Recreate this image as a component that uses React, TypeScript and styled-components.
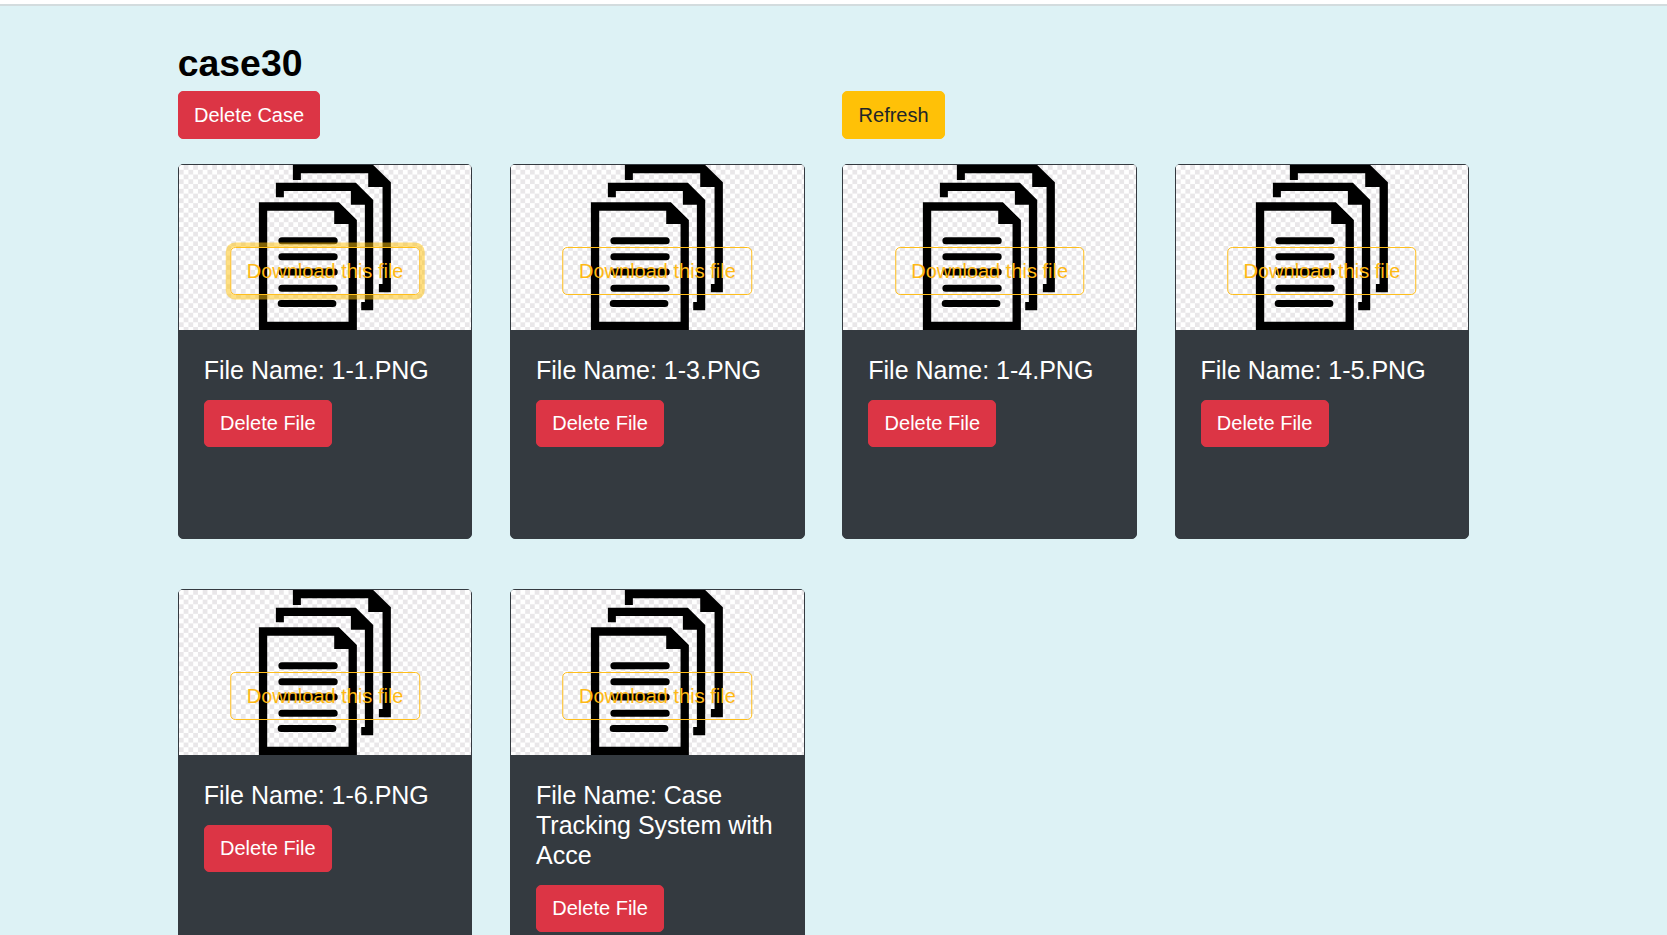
import React from "react";
import styled, { createGlobalStyle, css } from "styled-components";

const GlobalStyle = createGlobalStyle`
  *, *::before, *::after { box-sizing: border-box; }
  html, body { margin: 0; height: 935px; overflow: hidden; background: #ddf2f5; }
  body { font-family: "Liberation Sans", Arial, sans-serif; font-size: 20px; line-height: 1.5; color: #212529; }
`;

const TopEdge = styled.div`
  height: 6px;
  background: #fff;
  border-bottom: 2px solid #d3dcde;
`;

const Page = styled.main`
  width: 1291.6px;
  margin: 0 0 0 177.74px;
  padding-top: 29px;
`;

const Title = styled.h1`
  margin: 0;
  height: 56px;
  font-size: 37.4px;
  line-height: 56px;
  font-weight: 700;
  color: #000;
`;

const grid = css`
  display: grid;
  grid-template-columns: repeat(4, 294.75px);
  column-gap: 37.52px;
`;

const Actions = styled.div`
  ${grid}
  justify-items: start;
  margin-bottom: 25px;
`;

const CardGrid = styled.section`
  ${grid}
  grid-auto-rows: 375px;
  row-gap: 50px;
`;

const Button = styled.button<{ $kind: "danger" | "warning"; $column?: number; $tall?: boolean }>`
  ${(p) => p.$column && `grid-column: ${p.$column};`}
  height: ${(p) => (p.$tall ? 48 : 47)}px;
  padding: ${(p) => (p.$tall ? "0 15.3px" : "0 15.3px 2px")};
  border: 1px solid ${(p) => (p.$kind === "danger" ? "#dc3545" : "#ffc107")};
  border-radius: 5px;
  font: inherit;
  white-space: nowrap;
  color: ${(p) => (p.$kind === "danger" ? "#fff" : "#212529")};
  background: ${(p) => (p.$kind === "danger" ? "#dc3545" : "#ffc107")};
`;

const Card = styled.article`
  position: relative;
  height: 375px;
  border: 1px solid #343a40;
  border-radius: 5px;
  background: #343a40;
`;

const Thumb = styled.svg`
  display: block;
  width: 100%;
  height: 165px;
  border-radius: 2px 2px 0 0;
`;

const DownloadButton = styled.button<{ $focused?: boolean }>`
  position: absolute;
  top: 82px;
  left: 50%;
  transform: translateX(-50%);
  height: 48px;
  width: 189.5px;
  padding: 0;
  border: 1px solid #ffbe1c;
  border-radius: 5px;
  background: transparent;
  color: #ffb914;
  font: inherit;
  white-space: nowrap;
  ${(p) => p.$focused && "box-shadow: 0 0 0 4.5px rgba(255, 193, 7, 0.5);"}
`;

const CardBody = styled.div`
  padding: 25px;
`;

const FileName = styled.h5`
  margin: 0 0 15px;
  font-size: 25px;
  line-height: 30px;
  font-weight: 400;
  color: #fff;
`;

const files = ["1-1.PNG", "1-3.PNG", "1-4.PNG", "1-5.PNG", "1-6.PNG", "Case Tracking System with Acce"];

function FilesPicture({ id }: { id: string }) {
  return (
    <Thumb viewBox="0 0 879 495" preserveAspectRatio="xMidYMid slice" aria-hidden="true">
      <defs>
        <pattern id={id} width="28.6" height="28.6" patternUnits="userSpaceOnUse">
          <rect width="28.6" height="28.6" fill="#fff" />
          <path d="M14.3 0h14.3v14.3H14.3zM0 14.3h14.3v14.3H0z" fill="#e9e7e9" />
        </pattern>
      </defs>
      <rect x="-10" width="900" height="495" fill={`url(#${id})`} />
      <path d="M342 0H583L636 52V382H600V357H611V66H568V25H366V45H342Z" />
      <path d="M291 53H531L583 105V436H547V411H558V119H516V78H315V97H291Z" />
      <path
        fillRule="evenodd"
        d="M240 112H480L534 165V495H240ZM265 137V470H509V177H466V137Z"
      />
      <path
        d="M309 227H466M309 275.5H466M309 321H466M309 369.5H466M307 415.5H462"
        fill="none"
        stroke="#000"
        strokeWidth="21"
        strokeLinecap="round"
      />
    </Thumb>
  );
}

function FileCard({ name, id, focused }: { name: string; id: string; focused?: boolean }) {
  return (
    <Card>
      <FilesPicture id={id} />
      <DownloadButton $focused={focused}>Download this file</DownloadButton>
      <CardBody>
        <FileName>File Name: {name}</FileName>
        <Button $kind="danger">Delete File</Button>
      </CardBody>
    </Card>
  );
}

export default function App() {
  return (
    <>
      <GlobalStyle />
      <TopEdge />
      <Page>
        <Title>case30</Title>
        <Actions>
          <Button $kind="danger" $tall>Delete Case</Button>
          <Button $kind="warning" $column={3} $tall>Refresh</Button>
        </Actions>
        <CardGrid>
          {files.map((name, i) => (
            <FileCard key={name} name={name} id={`checks-${i}`} focused={i === 0} />
          ))}
        </CardGrid>
      </Page>
    </>
  );
}
